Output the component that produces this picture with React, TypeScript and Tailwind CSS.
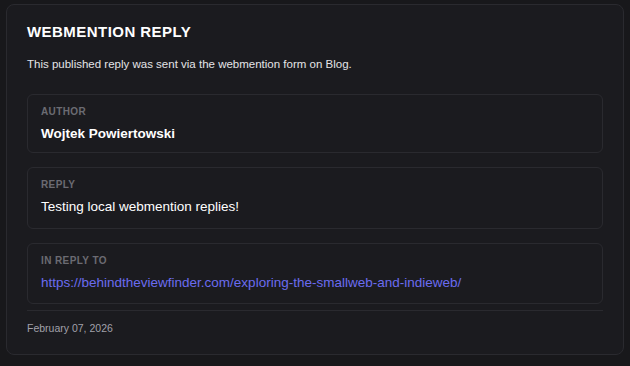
export default function App() {
  const fields = [
    { label: 'Author', value: 'Wojtek Powiertowski', kind: 'bold', pad: 'pb-[8px]' },
    { label: 'Reply', value: 'Testing local webmention replies!', kind: 'text', pad: 'pb-[11px]' },
    {
      label: 'In reply to',
      value: 'https://behindtheviewfinder.com/exploring-the-smallweb-and-indieweb/',
      kind: 'link',
      pad: 'pb-[10px]',
    },
  ]

  return (
    <div
      className="min-h-[366px] bg-[#18181b] px-[6px] pt-[4px] pb-[10px]"
      style={{ fontFamily: '"Liberation Sans", Arial, sans-serif' }}
    >
      <div className="rounded-lg border border-[#2a2a2f] bg-[#1b1b1f] px-5 pt-[16px] pb-[18px]">
        <h1 className="text-[15px] font-bold leading-[22px] tracking-[0.03em] text-white uppercase">
          Webmention Reply
        </h1>
        <p className="mt-[13px] text-[11.5px] leading-4 text-[#e4e4e7]">
          This published reply was sent via the webmention form on Blog.
        </p>

        <div className="mt-[22px] flex flex-col gap-[14px]">
          {fields.map(f => (
            <div key={f.label} className={'rounded-md border border-[#2a2a2f] px-[13px] pt-[10px] ' + f.pad}>
              <div className="text-[10px] leading-[14px] font-semibold tracking-[0.04em] text-[#6b6b72] uppercase">
                {f.label}
              </div>
              {f.kind === 'link' ? (
                <a href="#" className="mt-[5px] block text-[13.5px] leading-5 text-[#6b6cf0]">
                  {f.value}
                </a>
              ) : (
                <div
                  className={
                    'mt-[5px] text-[13.5px] leading-5 text-white ' + (f.kind === 'bold' ? 'font-bold' : '')
                  }
                >
                  {f.value}
                </div>
              )}
            </div>
          ))}
        </div>

        <div className="mt-[6px] border-t border-[#2a2a2f] pt-[9px] text-[10.5px] leading-4 text-[#a1a1aa]">
          February 07, 2026
        </div>
      </div>
    </div>
  )
}
